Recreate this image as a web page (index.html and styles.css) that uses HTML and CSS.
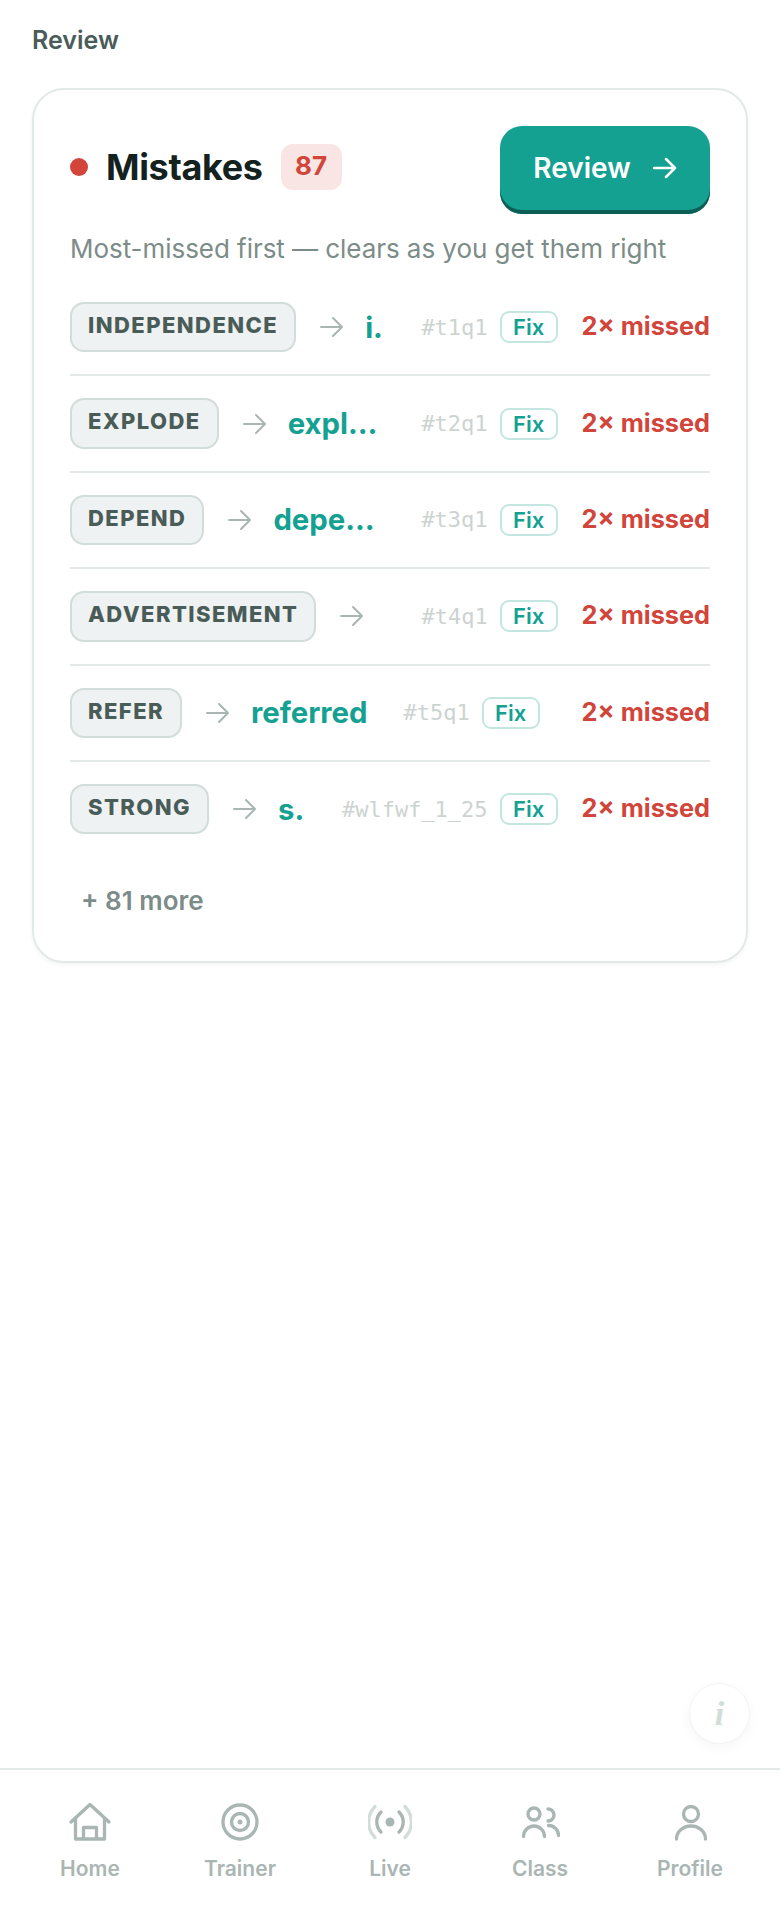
FILE: index.html
```html
<!DOCTYPE html>
<html>
<head>
<meta charset="utf-8"/>
<title>Review</title>
<link rel="stylesheet" href="styles.css">
</head>
<body>
<main class="page">
  <h2 class="page-title">Review</h2>

  <section class="card">
    <div class="card-head">
      <span class="dot"></span>
      <h1 class="card-title">Mistakes</h1>
      <span class="count">87</span>
      <a class="review-btn">Review
        <svg class="btn-arrow" viewBox="0 0 24 24"><path d="M1 12H22M13 3l9 9-9 9"/></svg>
      </a>
    </div>
    <p class="card-sub">Most-missed first — clears as you get them right</p>

    <ul class="rows">
      <li class="row">
        <div class="row-main">
          <span class="chip">INDEPENDENCE</span>
          <svg class="row-arrow" viewBox="0 0 24 24"><path d="M1 12H22M13 3l9 9-9 9"/></svg>
          <span class="word">independent</span>
          <div class="meta"><span class="qid">#t1q1</span><span class="fix">Fix</span></div>
        </div>
        <span class="missed">2× missed</span>
      </li>
      <li class="row">
        <div class="row-main">
          <span class="chip">EXPLODE</span>
          <svg class="row-arrow" viewBox="0 0 24 24"><path d="M1 12H22M13 3l9 9-9 9"/></svg>
          <span class="word">explosion</span>
          <div class="meta"><span class="qid">#t2q1</span><span class="fix">Fix</span></div>
        </div>
        <span class="missed">2× missed</span>
      </li>
      <li class="row">
        <div class="row-main">
          <span class="chip">DEPEND</span>
          <svg class="row-arrow" viewBox="0 0 24 24"><path d="M1 12H22M13 3l9 9-9 9"/></svg>
          <span class="word">dependent</span>
          <div class="meta"><span class="qid">#t3q1</span><span class="fix">Fix</span></div>
        </div>
        <span class="missed">2× missed</span>
      </li>
      <li class="row">
        <div class="row-main">
          <span class="chip">ADVERTISEMENT</span>
          <svg class="row-arrow" viewBox="0 0 24 24"><path d="M1 12H22M13 3l9 9-9 9"/></svg>
          <span class="word"></span>
          <div class="meta"><span class="qid">#t4q1</span><span class="fix">Fix</span></div>
        </div>
        <span class="missed">2× missed</span>
      </li>
      <li class="row">
        <div class="row-main">
          <span class="chip">REFER</span>
          <svg class="row-arrow" viewBox="0 0 24 24"><path d="M1 12H22M13 3l9 9-9 9"/></svg>
          <span class="word">referred</span>
          <div class="meta"><span class="qid">#t5q1</span><span class="fix">Fix</span></div>
        </div>
        <span class="missed">2× missed</span>
      </li>
      <li class="row">
        <div class="row-main">
          <span class="chip">STRONG</span>
          <svg class="row-arrow" viewBox="0 0 24 24"><path d="M1 12H22M13 3l9 9-9 9"/></svg>
          <span class="word">strength</span>
          <div class="meta"><span class="qid">#wlfwf_1_25</span><span class="fix">Fix</span></div>
        </div>
        <span class="missed">2× missed</span>
      </li>
    </ul>

    <div class="more">+ 81 more</div>
  </section>
</main>

<button class="info-btn">i</button>

<nav class="tabs">
  <a class="tab">
    <svg class="tab-icon" viewBox="0 0 44 40"><path d="M3 20L22 2.500 41 20M7.500 16.500V37H36.500V16.500M15.500 37V25.500H28.500V37"/></svg>
    <span>Home</span>
  </a>
  <a class="tab">
    <svg class="tab-icon" viewBox="0 0 44 40"><circle cx="22" cy="20" r="17"/><circle cx="22" cy="20" r="8.500"/><circle class="solid" cx="22" cy="20" r="2.500"/></svg>
    <span>Trainer</span>
  </a>
  <a class="tab">
    <svg class="tab-icon" viewBox="0 0 44 40"><circle class="solid" cx="22" cy="20" r="4.500"/><path d="M13 10a14 14 0 0 0 0 20M31 10a14 14 0 0 1 0 20"/><path class="faint" d="M7 4.500a22 22 0 0 0 0 31M37 4.500a22 22 0 0 1 0 31"/></svg>
    <span>Live</span>
  </a>
  <a class="tab">
    <svg class="tab-icon" viewBox="0 0 44 40"><circle cx="16" cy="12" r="6"/><path d="M5.500 34.500A10.500 10.500 0 0 1 26.500 34.500M30 7a6 6 0 0 1 0 12M30.500 23.500A10 10 0 0 1 40.500 33.500"/></svg>
    <span>Class</span>
  </a>
  <a class="tab">
    <svg class="tab-icon" viewBox="0 0 44 40"><circle cx="23" cy="12" r="7.500"/><path d="M8.500 37A14.500 13 0 0 1 37.500 37"/></svg>
    <span>Profile</span>
  </a>
</nav>
</body>
</html>
```

FILE: styles.css
```css
* {
   box-sizing: border-box;
}

html, body {
   height: 100%;
}

body {
   margin: 0;
   display: flex;
   flex-direction: column;
   background-color: white;
   font-family: Inter, "Liberation Sans", sans-serif;
   color: #14221f;
}

.page {
   flex: 1;
   padding: 24px 32px 0;
}

.page-title {
   margin: 0 0 32px;
   font-size: 25px;
   line-height: 32px;
   font-weight: 600;
   color: #4a5c58;
}

.card {
   border: 2px solid #e3e9e7;
   border-radius: 32px;
   padding: 36px 36px 40px;
   box-shadow: 0 2px 4px rgba(20, 34, 31, 0.05);
}

.card-head {
   display: flex;
   align-items: center;
   height: 82px;
}

.dot {
   width: 18px;
   height: 18px;
   border-radius: 50%;
   background: #d1453b;
   margin-right: 18px;
}

.card-title {
   margin: 0;
   font-size: 36px;
   font-weight: 700;
   letter-spacing: -0.01em;
   color: #14221f;
}

.count {
   margin-left: 18px;
   width: 61px;
   height: 46px;
   border-radius: 12px;
   background: #f9e5e3;
   color: #d1453b;
   font-size: 26px;
   font-weight: 700;
   line-height: 44px;
   text-align: center;
}

.review-btn {
   margin-left: auto;
   margin-bottom: -6px;
   width: 210px;
   height: 88px;
   padding-bottom: 4px;
   border-radius: 22px;
   background: #14a192;
   box-shadow: inset 0 -4px 0 #0d5e55;
   color: white;
   font-size: 28px;
   font-weight: 600;
   display: flex;
   align-items: center;
   justify-content: center;
   gap: 22px;
}

.btn-arrow {
   width: 24px;
   height: 24px;
   fill: none;
   stroke: white;
   stroke-width: 2.500;
   stroke-linecap: round;
   stroke-linejoin: round;
}

.card-sub {
   margin: 24px 0 0;
   font-size: 26px;
   line-height: 34px;
   letter-spacing: -0.05px;
   color: #7c8c88;
}

.rows {
   list-style: none;
   margin: 14px 0 0;
   padding: 0;
}

.row {
   display: flex;
   align-items: center;
   gap: 24px;
   padding: 22px 0;
   border-bottom: 2px solid #e3e9e7;
}

.row:last-child {
   border-bottom: none;
}

.row-main {
   flex: 1;
   min-width: 0;
   display: flex;
   align-items: center;
   gap: 21px;
}

.chip {
   flex: none;
   height: 50.400px;
   padding: 0 16px;
   border: 2px solid #d2dcd9;
   border-radius: 14px;
   background: #eef2f2;
   color: #4a5c58;
   font-size: 22px;
   font-weight: 800;
   letter-spacing: 0.065em;
   line-height: 42px;
}

.row-arrow {
   flex: none;
   margin-left: 3px;
   width: 24px;
   height: 24px;
   fill: none;
   stroke: #a9b6b3;
   stroke-width: 2;
   stroke-linecap: round;
   stroke-linejoin: round;
}

.word {
   min-width: 0;
   overflow: hidden;
   white-space: nowrap;
   text-overflow: ellipsis;
   font-size: 29.300px;
   font-weight: 700;
   color: #14a192;
}

.meta {
   flex: none;
   margin-left: 15px;
   display: flex;
   align-items: center;
   gap: 12px;
}

.qid {
   font-family: "DejaVu Sans Mono", monospace;
   font-size: 22px;
   color: #ccd3d1;
}

.fix {
   width: 58px;
   height: 32px;
   border: 2px solid #c3e7e0;
   border-radius: 9px;
   color: #14a192;
   font-size: 22px;
   font-weight: 600;
   line-height: 28px;
   text-align: center;
}

.missed {
   flex: none;
   padding-bottom: 3px;
   font-size: 25.300px;
   font-weight: 700;
   color: #d1453b;
}

.more {
   margin-top: 25px;
   padding-left: 11px;
   font-size: 26px;
   font-weight: 600;
   line-height: 40px;
   color: #7c8c88;
}

.info-btn {
   position: absolute;
   left: 689px;
   top: 1683px;
   width: 61px;
   height: 61px;
   padding: 0;
   border: 1px solid #f2f4f4;
   border-radius: 50%;
   background: white;
   box-shadow: 0 4px 12px rgba(20, 34, 31, 0.04);
   color: #d2dcd9;
   font-family: "Liberation Serif", serif;
   font-style: italic;
   font-weight: 700;
   font-size: 34px;
}

.tabs {
   height: 150px;
   flex: none;
   display: grid;
   grid-template-columns: repeat(5, 1fr);
   padding: 32px 15px 0;
   border-top: 2px solid #e3e9e7;
}

.tab {
   display: flex;
   flex-direction: column;
   align-items: center;
   gap: 15px;
   font-size: 21px;
   font-weight: 600;
   line-height: 24px;
   color: #a9b6b3;
}

.tab-icon {
   width: 44px;
   height: 40px;
   fill: none;
   stroke: #a9b6b3;
   stroke-width: 3.300;
   stroke-linecap: round;
   stroke-linejoin: round;
}

.tab-icon .solid {
   fill: #a9b6b3;
   stroke: none;
}

.tab-icon .faint {
   stroke: #d2dcd9;
}
```
